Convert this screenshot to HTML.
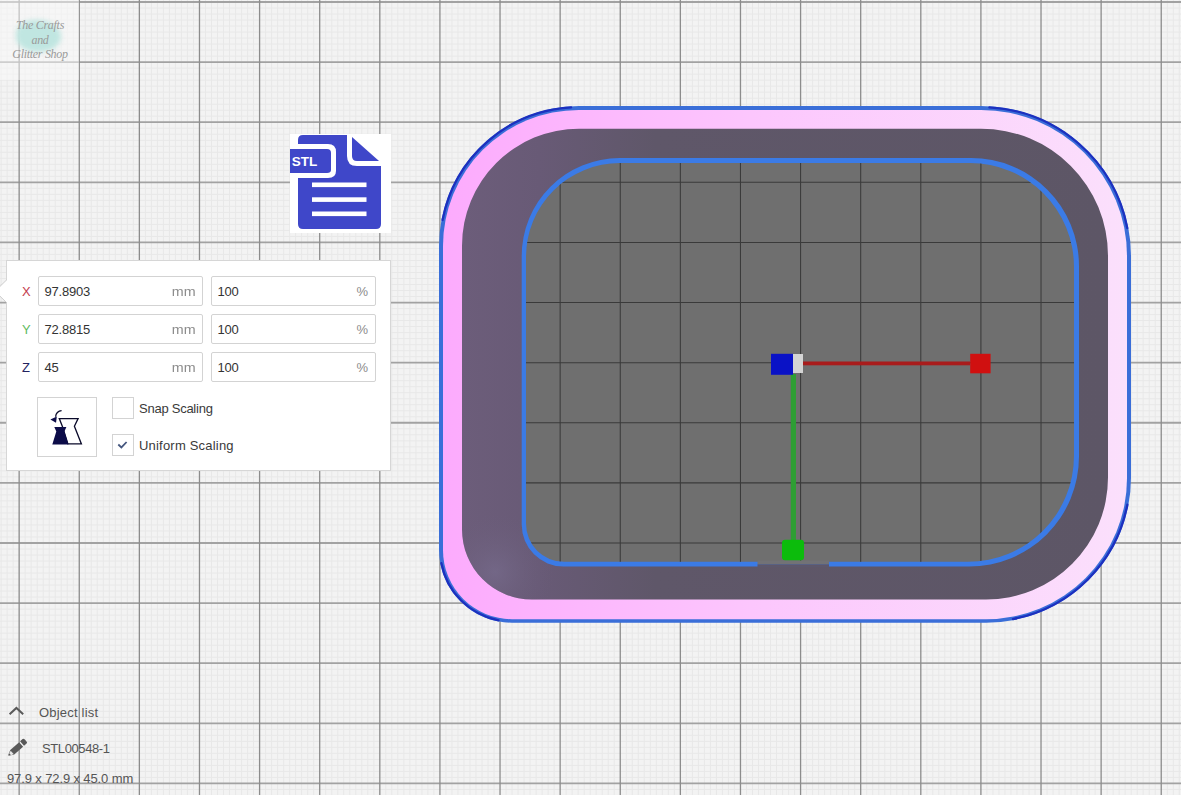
<!DOCTYPE html>
<html><head><meta charset="utf-8">
<style>
html,body{margin:0;padding:0}
body{width:1181px;height:795px;overflow:hidden;position:relative;background:#f3f3f3;font-family:"Liberation Sans",sans-serif}
.abs{position:absolute}
.panel{position:absolute;left:6px;top:260px;width:383px;height:209px;background:#fff;border:1px solid #d6d6d6;box-sizing:content-box}
.lbl{position:absolute;font-size:13px;line-height:16px}
.inp{position:absolute;height:28px;border:1px solid #d3d3d3;border-radius:2px;background:#fff;box-sizing:content-box}
.inp .v{position:absolute;left:5.5px;top:7px;letter-spacing:-0.2px;font-size:13px;line-height:16px;color:#333}
.inp .u{position:absolute;right:7px;top:7px;font-size:13px;line-height:16px;color:#8c8c8c}
.cb{position:absolute;width:20px;height:20px;border:1px solid #d3d3d3;background:#fff}
.txt{position:absolute;font-size:13px;line-height:16px;color:#3a3a3a;letter-spacing:-0.25px}
.bl{position:absolute;font-size:13px;line-height:16px;color:#555}
</style></head><body>
<svg width="1181" height="795" viewBox="0 0 1181 795" style="position:absolute;left:0;top:0">
<defs>
<linearGradient id="pk" x1="0" y1="0" x2="1" y2="0">
<stop offset="0" stop-color="#fcabfd"/><stop offset="0.45" stop-color="#fcc6fd"/><stop offset="1" stop-color="#fbe0fc"/>
</linearGradient>
<linearGradient id="pu" x1="0" y1="0" x2="1" y2="0">
<stop offset="0" stop-color="#6c5d7a"/><stop offset="0.12" stop-color="#685a76"/><stop offset="0.3" stop-color="#5f5769"/><stop offset="1" stop-color="#5d5666"/>
</linearGradient>
<radialGradient id="bl" cx="495" cy="572" r="60" gradientUnits="userSpaceOnUse">
<stop offset="0" stop-color="#7a7092" stop-opacity="0.55"/><stop offset="1" stop-color="#6a5d7a" stop-opacity="0"/>
</radialGradient>
<clipPath id="fc"><path d="M620.00,163.00 L970.00,163.00 A104,104 0 0 1 1074.00,267.00 L1074.00,455.80 A106,106 0 0 1 968.00,561.80 L564.00,561.80 A38,38 0 0 1 526.00,523.80 L526.00,257.00 A94,94 0 0 1 620.00,163.00 Z"/></clipPath>
</defs>
<g stroke="#e8e8e8" stroke-width="1"><line x1="1.12" y1="0" x2="1.12" y2="795"/><line x1="7.13" y1="0" x2="7.13" y2="795"/><line x1="13.14" y1="0" x2="13.14" y2="795"/><line x1="25.16" y1="0" x2="25.16" y2="795"/><line x1="31.17" y1="0" x2="31.17" y2="795"/><line x1="37.18" y1="0" x2="37.18" y2="795"/><line x1="43.19" y1="0" x2="43.19" y2="795"/><line x1="49.20" y1="0" x2="49.20" y2="795"/><line x1="55.22" y1="0" x2="55.22" y2="795"/><line x1="61.23" y1="0" x2="61.23" y2="795"/><line x1="67.24" y1="0" x2="67.24" y2="795"/><line x1="73.25" y1="0" x2="73.25" y2="795"/><line x1="85.27" y1="0" x2="85.27" y2="795"/><line x1="91.28" y1="0" x2="91.28" y2="795"/><line x1="97.29" y1="0" x2="97.29" y2="795"/><line x1="103.30" y1="0" x2="103.30" y2="795"/><line x1="109.31" y1="0" x2="109.31" y2="795"/><line x1="115.33" y1="0" x2="115.33" y2="795"/><line x1="121.34" y1="0" x2="121.34" y2="795"/><line x1="127.35" y1="0" x2="127.35" y2="795"/><line x1="133.36" y1="0" x2="133.36" y2="795"/><line x1="145.38" y1="0" x2="145.38" y2="795"/><line x1="151.39" y1="0" x2="151.39" y2="795"/><line x1="157.40" y1="0" x2="157.40" y2="795"/><line x1="163.41" y1="0" x2="163.41" y2="795"/><line x1="169.43" y1="0" x2="169.43" y2="795"/><line x1="175.44" y1="0" x2="175.44" y2="795"/><line x1="181.45" y1="0" x2="181.45" y2="795"/><line x1="187.46" y1="0" x2="187.46" y2="795"/><line x1="193.47" y1="0" x2="193.47" y2="795"/><line x1="205.49" y1="0" x2="205.49" y2="795"/><line x1="211.50" y1="0" x2="211.50" y2="795"/><line x1="217.51" y1="0" x2="217.51" y2="795"/><line x1="223.52" y1="0" x2="223.52" y2="795"/><line x1="229.53" y1="0" x2="229.53" y2="795"/><line x1="235.55" y1="0" x2="235.55" y2="795"/><line x1="241.56" y1="0" x2="241.56" y2="795"/><line x1="247.57" y1="0" x2="247.57" y2="795"/><line x1="253.58" y1="0" x2="253.58" y2="795"/><line x1="265.60" y1="0" x2="265.60" y2="795"/><line x1="271.61" y1="0" x2="271.61" y2="795"/><line x1="277.62" y1="0" x2="277.62" y2="795"/><line x1="283.63" y1="0" x2="283.63" y2="795"/><line x1="289.64" y1="0" x2="289.64" y2="795"/><line x1="295.66" y1="0" x2="295.66" y2="795"/><line x1="301.67" y1="0" x2="301.67" y2="795"/><line x1="307.68" y1="0" x2="307.68" y2="795"/><line x1="313.69" y1="0" x2="313.69" y2="795"/><line x1="325.71" y1="0" x2="325.71" y2="795"/><line x1="331.72" y1="0" x2="331.72" y2="795"/><line x1="337.73" y1="0" x2="337.73" y2="795"/><line x1="343.74" y1="0" x2="343.74" y2="795"/><line x1="349.75" y1="0" x2="349.75" y2="795"/><line x1="355.77" y1="0" x2="355.77" y2="795"/><line x1="361.78" y1="0" x2="361.78" y2="795"/><line x1="367.79" y1="0" x2="367.79" y2="795"/><line x1="373.80" y1="0" x2="373.80" y2="795"/><line x1="385.82" y1="0" x2="385.82" y2="795"/><line x1="391.83" y1="0" x2="391.83" y2="795"/><line x1="397.84" y1="0" x2="397.84" y2="795"/><line x1="403.85" y1="0" x2="403.85" y2="795"/><line x1="409.86" y1="0" x2="409.86" y2="795"/><line x1="415.88" y1="0" x2="415.88" y2="795"/><line x1="421.89" y1="0" x2="421.89" y2="795"/><line x1="427.90" y1="0" x2="427.90" y2="795"/><line x1="433.91" y1="0" x2="433.91" y2="795"/><line x1="445.93" y1="0" x2="445.93" y2="795"/><line x1="451.94" y1="0" x2="451.94" y2="795"/><line x1="457.95" y1="0" x2="457.95" y2="795"/><line x1="463.96" y1="0" x2="463.96" y2="795"/><line x1="469.97" y1="0" x2="469.97" y2="795"/><line x1="475.99" y1="0" x2="475.99" y2="795"/><line x1="482.00" y1="0" x2="482.00" y2="795"/><line x1="488.01" y1="0" x2="488.01" y2="795"/><line x1="494.02" y1="0" x2="494.02" y2="795"/><line x1="506.04" y1="0" x2="506.04" y2="795"/><line x1="512.05" y1="0" x2="512.05" y2="795"/><line x1="518.06" y1="0" x2="518.06" y2="795"/><line x1="524.07" y1="0" x2="524.07" y2="795"/><line x1="530.08" y1="0" x2="530.08" y2="795"/><line x1="536.10" y1="0" x2="536.10" y2="795"/><line x1="542.11" y1="0" x2="542.11" y2="795"/><line x1="548.12" y1="0" x2="548.12" y2="795"/><line x1="554.13" y1="0" x2="554.13" y2="795"/><line x1="566.15" y1="0" x2="566.15" y2="795"/><line x1="572.16" y1="0" x2="572.16" y2="795"/><line x1="578.17" y1="0" x2="578.17" y2="795"/><line x1="584.18" y1="0" x2="584.18" y2="795"/><line x1="590.19" y1="0" x2="590.19" y2="795"/><line x1="596.21" y1="0" x2="596.21" y2="795"/><line x1="602.22" y1="0" x2="602.22" y2="795"/><line x1="608.23" y1="0" x2="608.23" y2="795"/><line x1="614.24" y1="0" x2="614.24" y2="795"/><line x1="626.26" y1="0" x2="626.26" y2="795"/><line x1="632.27" y1="0" x2="632.27" y2="795"/><line x1="638.28" y1="0" x2="638.28" y2="795"/><line x1="644.29" y1="0" x2="644.29" y2="795"/><line x1="650.30" y1="0" x2="650.30" y2="795"/><line x1="656.32" y1="0" x2="656.32" y2="795"/><line x1="662.33" y1="0" x2="662.33" y2="795"/><line x1="668.34" y1="0" x2="668.34" y2="795"/><line x1="674.35" y1="0" x2="674.35" y2="795"/><line x1="686.37" y1="0" x2="686.37" y2="795"/><line x1="692.38" y1="0" x2="692.38" y2="795"/><line x1="698.39" y1="0" x2="698.39" y2="795"/><line x1="704.40" y1="0" x2="704.40" y2="795"/><line x1="710.41" y1="0" x2="710.41" y2="795"/><line x1="716.43" y1="0" x2="716.43" y2="795"/><line x1="722.44" y1="0" x2="722.44" y2="795"/><line x1="728.45" y1="0" x2="728.45" y2="795"/><line x1="734.46" y1="0" x2="734.46" y2="795"/><line x1="746.48" y1="0" x2="746.48" y2="795"/><line x1="752.49" y1="0" x2="752.49" y2="795"/><line x1="758.50" y1="0" x2="758.50" y2="795"/><line x1="764.51" y1="0" x2="764.51" y2="795"/><line x1="770.52" y1="0" x2="770.52" y2="795"/><line x1="776.54" y1="0" x2="776.54" y2="795"/><line x1="782.55" y1="0" x2="782.55" y2="795"/><line x1="788.56" y1="0" x2="788.56" y2="795"/><line x1="794.57" y1="0" x2="794.57" y2="795"/><line x1="806.59" y1="0" x2="806.59" y2="795"/><line x1="812.60" y1="0" x2="812.60" y2="795"/><line x1="818.61" y1="0" x2="818.61" y2="795"/><line x1="824.62" y1="0" x2="824.62" y2="795"/><line x1="830.63" y1="0" x2="830.63" y2="795"/><line x1="836.65" y1="0" x2="836.65" y2="795"/><line x1="842.66" y1="0" x2="842.66" y2="795"/><line x1="848.67" y1="0" x2="848.67" y2="795"/><line x1="854.68" y1="0" x2="854.68" y2="795"/><line x1="866.70" y1="0" x2="866.70" y2="795"/><line x1="872.71" y1="0" x2="872.71" y2="795"/><line x1="878.72" y1="0" x2="878.72" y2="795"/><line x1="884.73" y1="0" x2="884.73" y2="795"/><line x1="890.74" y1="0" x2="890.74" y2="795"/><line x1="896.76" y1="0" x2="896.76" y2="795"/><line x1="902.77" y1="0" x2="902.77" y2="795"/><line x1="908.78" y1="0" x2="908.78" y2="795"/><line x1="914.79" y1="0" x2="914.79" y2="795"/><line x1="926.81" y1="0" x2="926.81" y2="795"/><line x1="932.82" y1="0" x2="932.82" y2="795"/><line x1="938.83" y1="0" x2="938.83" y2="795"/><line x1="944.84" y1="0" x2="944.84" y2="795"/><line x1="950.85" y1="0" x2="950.85" y2="795"/><line x1="956.87" y1="0" x2="956.87" y2="795"/><line x1="962.88" y1="0" x2="962.88" y2="795"/><line x1="968.89" y1="0" x2="968.89" y2="795"/><line x1="974.90" y1="0" x2="974.90" y2="795"/><line x1="986.92" y1="0" x2="986.92" y2="795"/><line x1="992.93" y1="0" x2="992.93" y2="795"/><line x1="998.94" y1="0" x2="998.94" y2="795"/><line x1="1004.95" y1="0" x2="1004.95" y2="795"/><line x1="1010.96" y1="0" x2="1010.96" y2="795"/><line x1="1016.98" y1="0" x2="1016.98" y2="795"/><line x1="1022.99" y1="0" x2="1022.99" y2="795"/><line x1="1029.00" y1="0" x2="1029.00" y2="795"/><line x1="1035.01" y1="0" x2="1035.01" y2="795"/><line x1="1047.03" y1="0" x2="1047.03" y2="795"/><line x1="1053.04" y1="0" x2="1053.04" y2="795"/><line x1="1059.05" y1="0" x2="1059.05" y2="795"/><line x1="1065.06" y1="0" x2="1065.06" y2="795"/><line x1="1071.08" y1="0" x2="1071.08" y2="795"/><line x1="1077.09" y1="0" x2="1077.09" y2="795"/><line x1="1083.10" y1="0" x2="1083.10" y2="795"/><line x1="1089.11" y1="0" x2="1089.11" y2="795"/><line x1="1095.12" y1="0" x2="1095.12" y2="795"/><line x1="1107.14" y1="0" x2="1107.14" y2="795"/><line x1="1113.15" y1="0" x2="1113.15" y2="795"/><line x1="1119.16" y1="0" x2="1119.16" y2="795"/><line x1="1125.17" y1="0" x2="1125.17" y2="795"/><line x1="1131.19" y1="0" x2="1131.19" y2="795"/><line x1="1137.20" y1="0" x2="1137.20" y2="795"/><line x1="1143.21" y1="0" x2="1143.21" y2="795"/><line x1="1149.22" y1="0" x2="1149.22" y2="795"/><line x1="1155.23" y1="0" x2="1155.23" y2="795"/><line x1="1167.25" y1="0" x2="1167.25" y2="795"/><line x1="1173.26" y1="0" x2="1173.26" y2="795"/><line x1="1179.27" y1="0" x2="1179.27" y2="795"/><line x1="0" y1="8.01" x2="1181" y2="8.01"/><line x1="0" y1="14.02" x2="1181" y2="14.02"/><line x1="0" y1="20.03" x2="1181" y2="20.03"/><line x1="0" y1="26.04" x2="1181" y2="26.04"/><line x1="0" y1="32.05" x2="1181" y2="32.05"/><line x1="0" y1="38.07" x2="1181" y2="38.07"/><line x1="0" y1="44.08" x2="1181" y2="44.08"/><line x1="0" y1="50.09" x2="1181" y2="50.09"/><line x1="0" y1="56.10" x2="1181" y2="56.10"/><line x1="0" y1="68.12" x2="1181" y2="68.12"/><line x1="0" y1="74.13" x2="1181" y2="74.13"/><line x1="0" y1="80.14" x2="1181" y2="80.14"/><line x1="0" y1="86.15" x2="1181" y2="86.15"/><line x1="0" y1="92.16" x2="1181" y2="92.16"/><line x1="0" y1="98.18" x2="1181" y2="98.18"/><line x1="0" y1="104.19" x2="1181" y2="104.19"/><line x1="0" y1="110.20" x2="1181" y2="110.20"/><line x1="0" y1="116.21" x2="1181" y2="116.21"/><line x1="0" y1="128.23" x2="1181" y2="128.23"/><line x1="0" y1="134.24" x2="1181" y2="134.24"/><line x1="0" y1="140.25" x2="1181" y2="140.25"/><line x1="0" y1="146.26" x2="1181" y2="146.26"/><line x1="0" y1="152.28" x2="1181" y2="152.28"/><line x1="0" y1="158.29" x2="1181" y2="158.29"/><line x1="0" y1="164.30" x2="1181" y2="164.30"/><line x1="0" y1="170.31" x2="1181" y2="170.31"/><line x1="0" y1="176.32" x2="1181" y2="176.32"/><line x1="0" y1="188.34" x2="1181" y2="188.34"/><line x1="0" y1="194.35" x2="1181" y2="194.35"/><line x1="0" y1="200.36" x2="1181" y2="200.36"/><line x1="0" y1="206.37" x2="1181" y2="206.37"/><line x1="0" y1="212.38" x2="1181" y2="212.38"/><line x1="0" y1="218.40" x2="1181" y2="218.40"/><line x1="0" y1="224.41" x2="1181" y2="224.41"/><line x1="0" y1="230.42" x2="1181" y2="230.42"/><line x1="0" y1="236.43" x2="1181" y2="236.43"/><line x1="0" y1="248.45" x2="1181" y2="248.45"/><line x1="0" y1="254.46" x2="1181" y2="254.46"/><line x1="0" y1="260.47" x2="1181" y2="260.47"/><line x1="0" y1="266.48" x2="1181" y2="266.48"/><line x1="0" y1="272.50" x2="1181" y2="272.50"/><line x1="0" y1="278.51" x2="1181" y2="278.51"/><line x1="0" y1="284.52" x2="1181" y2="284.52"/><line x1="0" y1="290.53" x2="1181" y2="290.53"/><line x1="0" y1="296.54" x2="1181" y2="296.54"/><line x1="0" y1="308.56" x2="1181" y2="308.56"/><line x1="0" y1="314.57" x2="1181" y2="314.57"/><line x1="0" y1="320.58" x2="1181" y2="320.58"/><line x1="0" y1="326.59" x2="1181" y2="326.59"/><line x1="0" y1="332.61" x2="1181" y2="332.61"/><line x1="0" y1="338.62" x2="1181" y2="338.62"/><line x1="0" y1="344.63" x2="1181" y2="344.63"/><line x1="0" y1="350.64" x2="1181" y2="350.64"/><line x1="0" y1="356.65" x2="1181" y2="356.65"/><line x1="0" y1="368.67" x2="1181" y2="368.67"/><line x1="0" y1="374.68" x2="1181" y2="374.68"/><line x1="0" y1="380.69" x2="1181" y2="380.69"/><line x1="0" y1="386.70" x2="1181" y2="386.70"/><line x1="0" y1="392.71" x2="1181" y2="392.71"/><line x1="0" y1="398.73" x2="1181" y2="398.73"/><line x1="0" y1="404.74" x2="1181" y2="404.74"/><line x1="0" y1="410.75" x2="1181" y2="410.75"/><line x1="0" y1="416.76" x2="1181" y2="416.76"/><line x1="0" y1="428.78" x2="1181" y2="428.78"/><line x1="0" y1="434.79" x2="1181" y2="434.79"/><line x1="0" y1="440.80" x2="1181" y2="440.80"/><line x1="0" y1="446.81" x2="1181" y2="446.81"/><line x1="0" y1="452.82" x2="1181" y2="452.82"/><line x1="0" y1="458.84" x2="1181" y2="458.84"/><line x1="0" y1="464.85" x2="1181" y2="464.85"/><line x1="0" y1="470.86" x2="1181" y2="470.86"/><line x1="0" y1="476.87" x2="1181" y2="476.87"/><line x1="0" y1="488.89" x2="1181" y2="488.89"/><line x1="0" y1="494.90" x2="1181" y2="494.90"/><line x1="0" y1="500.91" x2="1181" y2="500.91"/><line x1="0" y1="506.92" x2="1181" y2="506.92"/><line x1="0" y1="512.93" x2="1181" y2="512.93"/><line x1="0" y1="518.95" x2="1181" y2="518.95"/><line x1="0" y1="524.96" x2="1181" y2="524.96"/><line x1="0" y1="530.97" x2="1181" y2="530.97"/><line x1="0" y1="536.98" x2="1181" y2="536.98"/><line x1="0" y1="549.00" x2="1181" y2="549.00"/><line x1="0" y1="555.01" x2="1181" y2="555.01"/><line x1="0" y1="561.02" x2="1181" y2="561.02"/><line x1="0" y1="567.03" x2="1181" y2="567.03"/><line x1="0" y1="573.04" x2="1181" y2="573.04"/><line x1="0" y1="579.06" x2="1181" y2="579.06"/><line x1="0" y1="585.07" x2="1181" y2="585.07"/><line x1="0" y1="591.08" x2="1181" y2="591.08"/><line x1="0" y1="597.09" x2="1181" y2="597.09"/><line x1="0" y1="609.11" x2="1181" y2="609.11"/><line x1="0" y1="615.12" x2="1181" y2="615.12"/><line x1="0" y1="621.13" x2="1181" y2="621.13"/><line x1="0" y1="627.14" x2="1181" y2="627.14"/><line x1="0" y1="633.15" x2="1181" y2="633.15"/><line x1="0" y1="639.17" x2="1181" y2="639.17"/><line x1="0" y1="645.18" x2="1181" y2="645.18"/><line x1="0" y1="651.19" x2="1181" y2="651.19"/><line x1="0" y1="657.20" x2="1181" y2="657.20"/><line x1="0" y1="669.22" x2="1181" y2="669.22"/><line x1="0" y1="675.23" x2="1181" y2="675.23"/><line x1="0" y1="681.24" x2="1181" y2="681.24"/><line x1="0" y1="687.25" x2="1181" y2="687.25"/><line x1="0" y1="693.26" x2="1181" y2="693.26"/><line x1="0" y1="699.28" x2="1181" y2="699.28"/><line x1="0" y1="705.29" x2="1181" y2="705.29"/><line x1="0" y1="711.30" x2="1181" y2="711.30"/><line x1="0" y1="717.31" x2="1181" y2="717.31"/><line x1="0" y1="729.33" x2="1181" y2="729.33"/><line x1="0" y1="735.34" x2="1181" y2="735.34"/><line x1="0" y1="741.35" x2="1181" y2="741.35"/><line x1="0" y1="747.36" x2="1181" y2="747.36"/><line x1="0" y1="753.37" x2="1181" y2="753.37"/><line x1="0" y1="759.39" x2="1181" y2="759.39"/><line x1="0" y1="765.40" x2="1181" y2="765.40"/><line x1="0" y1="771.41" x2="1181" y2="771.41"/><line x1="0" y1="777.42" x2="1181" y2="777.42"/><line x1="0" y1="789.44" x2="1181" y2="789.44"/><line x1="0" y1="795.45" x2="1181" y2="795.45"/></g>
<g stroke="#a2a2a2" stroke-width="1.8"><line x1="0" y1="2.00" x2="1181" y2="2.00"/><line x1="0" y1="62.11" x2="1181" y2="62.11"/><line x1="0" y1="122.22" x2="1181" y2="122.22"/><line x1="0" y1="182.33" x2="1181" y2="182.33"/><line x1="0" y1="242.44" x2="1181" y2="242.44"/><line x1="0" y1="302.55" x2="1181" y2="302.55"/><line x1="0" y1="362.66" x2="1181" y2="362.66"/><line x1="0" y1="422.77" x2="1181" y2="422.77"/><line x1="0" y1="482.88" x2="1181" y2="482.88"/><line x1="0" y1="542.99" x2="1181" y2="542.99"/><line x1="0" y1="603.10" x2="1181" y2="603.10"/><line x1="0" y1="663.21" x2="1181" y2="663.21"/><line x1="0" y1="723.32" x2="1181" y2="723.32"/><line x1="0" y1="783.43" x2="1181" y2="783.43"/></g>
<g stroke="#8c8c8c" stroke-width="1.3"><line x1="19.15" y1="0" x2="19.15" y2="795"/><line x1="79.26" y1="0" x2="79.26" y2="795"/><line x1="139.37" y1="0" x2="139.37" y2="795"/><line x1="199.48" y1="0" x2="199.48" y2="795"/><line x1="259.59" y1="0" x2="259.59" y2="795"/><line x1="319.70" y1="0" x2="319.70" y2="795"/><line x1="379.81" y1="0" x2="379.81" y2="795"/><line x1="439.92" y1="0" x2="439.92" y2="795"/><line x1="500.03" y1="0" x2="500.03" y2="795"/><line x1="560.14" y1="0" x2="560.14" y2="795"/><line x1="620.25" y1="0" x2="620.25" y2="795"/><line x1="680.36" y1="0" x2="680.36" y2="795"/><line x1="740.47" y1="0" x2="740.47" y2="795"/><line x1="800.58" y1="0" x2="800.58" y2="795"/><line x1="860.69" y1="0" x2="860.69" y2="795"/><line x1="920.80" y1="0" x2="920.80" y2="795"/><line x1="980.91" y1="0" x2="980.91" y2="795"/><line x1="1041.02" y1="0" x2="1041.02" y2="795"/><line x1="1101.13" y1="0" x2="1101.13" y2="795"/><line x1="1161.24" y1="0" x2="1161.24" y2="795"/></g>
<path d="M579.00,106.00 L981.00,106.00 A150,150 0 0 1 1131.00,256.00 L1131.00,477.70 A145,145 0 0 1 986.00,622.70 L512.00,622.70 A73,73 0 0 1 439.00,549.70 L439.00,246.00 A140,140 0 0 1 579.00,106.00 Z" fill="#3a6ed8"/>
<path d="M579.00,110.00 L981.00,110.00 A146,146 0 0 1 1127.00,256.00 L1127.00,478.20 A141,141 0 0 1 986.00,619.20 L512.00,619.20 A69,69 0 0 1 443.00,550.20 L443.00,246.00 A136,136 0 0 1 579.00,110.00 Z" fill="url(#pk)"/>
<path d="M442.56,219.97 A138.9,138.9 0 0 1 571.15,107.32 M989.42,107.34 A148.9,148.9 0 0 1 1127.26,228.10 M1127.35,504.66 A143.9,143.9 0 0 1 1012.96,619.05 M498.53,620.33 A71.9,71.9 0 0 1 441.37,563.17 " fill="none" stroke="#1c30bf" stroke-width="2.3" stroke-linecap="round"/>
<path d="M579.00,128.70 L981.00,128.70 A127,127 0 0 1 1108.00,255.70 L1108.00,477.50 A122,122 0 0 1 986.00,599.50 L532.00,599.50 A70,70 0 0 1 462.00,529.50 L462.00,245.70 A117,117 0 0 1 579.00,128.70 Z" fill="url(#pu)"/>
<path d="M579.00,128.70 L981.00,128.70 A127,127 0 0 1 1108.00,255.70 L1108.00,477.50 A122,122 0 0 1 986.00,599.50 L532.00,599.50 A70,70 0 0 1 462.00,529.50 L462.00,245.70 A117,117 0 0 1 579.00,128.70 Z" fill="url(#bl)"/>
<path d="M619.70,158.00 L971.00,158.00 A108,108 0 0 1 1079.00,266.00 L1079.00,456.60 A110,110 0 0 1 969.00,566.60 L563.70,566.60 A42,42 0 0 1 521.70,524.60 L521.70,256.00 A98,98 0 0 1 619.70,158.00 Z" fill="#3b7be6"/>
<path d="M620.00,163.00 L970.00,163.00 A104,104 0 0 1 1074.00,267.00 L1074.00,455.80 A106,106 0 0 1 968.00,561.80 L564.00,561.80 A38,38 0 0 1 526.00,523.80 L526.00,257.00 A94,94 0 0 1 620.00,163.00 Z" fill="#6f6f6f"/>
<g clip-path="url(#fc)" stroke="#3a3a3a" stroke-width="1.05"><line x1="500.03" y1="150" x2="500.03" y2="580"/><line x1="560.14" y1="150" x2="560.14" y2="580"/><line x1="620.25" y1="150" x2="620.25" y2="580"/><line x1="680.36" y1="150" x2="680.36" y2="580"/><line x1="740.47" y1="150" x2="740.47" y2="580"/><line x1="800.58" y1="150" x2="800.58" y2="580"/><line x1="860.69" y1="150" x2="860.69" y2="580"/><line x1="920.80" y1="150" x2="920.80" y2="580"/><line x1="980.91" y1="150" x2="980.91" y2="580"/><line x1="1041.02" y1="150" x2="1041.02" y2="580"/><line x1="500" y1="182.33" x2="1100" y2="182.33"/><line x1="500" y1="242.44" x2="1100" y2="242.44"/><line x1="500" y1="302.55" x2="1100" y2="302.55"/><line x1="500" y1="362.66" x2="1100" y2="362.66"/><line x1="500" y1="422.77" x2="1100" y2="422.77"/><line x1="500" y1="482.88" x2="1100" y2="482.88"/><line x1="500" y1="542.99" x2="1100" y2="542.99"/></g>
<rect x="757.5" y="560.5" width="71.5" height="3.8" fill="#727276"/>
<rect x="757.5" y="564.3" width="71.5" height="2.6" fill="#5f5769"/>
<!-- gizmo -->
<rect x="803" y="361.5" width="167" height="3.8" fill="#a81c1c"/>
<rect x="970.2" y="353.8" width="20.4" height="19.5" fill="#d01010"/>
<rect x="790.8" y="374" width="5.2" height="167" fill="#2e9e34"/>
<rect x="782" y="539.8" width="22" height="20.5" rx="3" fill="#0cbc0c"/>
<rect x="771" y="353.8" width="22" height="21" fill="#0a12c6"/>
<rect x="793" y="354" width="10" height="19" fill="#d4d4d4"/>
</svg>
<!-- logo -->
<div class="abs" style="left:0;top:0;width:78.6px;height:80px;background:rgba(250,250,250,0.5)"></div>
<div class="abs" style="left:16px;top:20px;width:45px;height:32px;border-radius:45% 55% 50% 50%;background:#c0e6e1;filter:blur(2.5px)"></div>
<div class="abs" style="left:4px;top:18px;width:72px;text-align:center;font-family:'Liberation Serif',serif;font-style:italic;font-size:12px;line-height:14.5px;color:#9a9a9a;letter-spacing:-0.3px">The Crafts<br>and<br>Glitter Shop</div>

<!-- STL icon -->
<svg class="abs" style="left:290px;top:134px" width="101" height="99" viewBox="0 0 101 99">
<rect x="0" y="0" width="101" height="99" fill="#fff"/>
<path d="M13,1 L57,1 L57,22 Q57,32 67,32 L91,32 L91,90 Q91,95 86,95 L13,95 Q8,95 8,90 L8,6 Q8,1 13,1 Z" fill="#3f47c9"/>
<path d="M62,3 L89,27 L67,27 Q62,27 62,22 Z" fill="#3f47c9"/>
<path d="M0,10 L38,10 Q46,10 46,18 L46,37 Q46,44 38,44 L0,44 Z" fill="#fff"/>
<path d="M0,15 L37,15 Q41,15 41,19 L41,36 Q41,39 37,39 L0,39 Z" fill="#3f47c9"/>
<text x="1.8" y="32" font-family="Liberation Sans" font-weight="bold" font-size="13.5" fill="#fff">STL</text>
<rect x="22" y="48.5" width="54.5" height="4.6" fill="#fff"/>
<rect x="22" y="63.3" width="54.5" height="4.6" fill="#fff"/>
<rect x="22" y="77.5" width="54.5" height="4.6" fill="#fff"/>
</svg>

<!-- panel -->
<div class="panel">
  <div class="lbl" style="left:15px;top:23px;color:#c43c4e">X</div>
  <div class="lbl" style="left:15px;top:61px;color:#62bb62">Y</div>
  <div class="lbl" style="left:15px;top:99px;color:#23235f">Z</div>
  <div class="inp" style="left:31px;top:15px;width:163px"><span class="v">97.8903</span><span class="u" style="right:6.3px;transform:scaleX(1.1);transform-origin:100% 50%">mm</span></div>
  <div class="inp" style="left:204px;top:15px;width:163px"><span class="v">100</span><span class="u">%</span></div>
  <div class="inp" style="left:31px;top:53px;width:163px"><span class="v">72.8815</span><span class="u" style="right:6.3px;transform:scaleX(1.1);transform-origin:100% 50%">mm</span></div>
  <div class="inp" style="left:204px;top:53px;width:163px"><span class="v">100</span><span class="u">%</span></div>
  <div class="inp" style="left:31px;top:91px;width:163px"><span class="v">45</span><span class="u" style="right:6.3px;transform:scaleX(1.1);transform-origin:100% 50%">mm</span></div>
  <div class="inp" style="left:204px;top:91px;width:163px"><span class="v">100</span><span class="u">%</span></div>
  <div class="abs" style="left:30px;top:136px;width:58px;height:58px;border:1px solid #d3d3d3"></div>
  <svg class="abs" style="left:30px;top:135px" width="64" height="65" viewBox="1 0.8 64 65">
    <path d="M23.3,23.4 L42.1,23.4 L38.4,31 L45.4,48.7 L31.9,48.7 L26.5,31.5 Z" fill="#fff" stroke="#0a0a2a" stroke-width="1.3" stroke-linejoin="miter"/>
    <path d="M18.3,31.9 L30.4,31.9 L28.4,36.3 L32.4,49.2 L16.3,49.2 L20.3,36.3 Z" fill="#0c0c48"/>
    <path d="M25.6,15.5 A6.2,6.2 0 0 0 19.6,21.6" fill="none" stroke="#0a0a2a" stroke-width="1.3"/>
    <path d="M14.4,24.3 L20.8,21.2 L20,27.6 Z" fill="#0c0c48"/>
  </svg>
  <div class="cb" style="left:105px;top:136px"></div>
  <div class="cb" style="left:105px;top:173px"><svg width="20" height="20" style="position:absolute;left:0;top:0"><path d="M5.3,9.5 L8.4,12.4 L13.6,7" fill="none" stroke="#45567e" stroke-width="1.8"/></svg></div>
  <div class="txt" style="left:132px;top:140px">Snap Scaling</div>
  <div class="txt" style="left:132px;top:177px;letter-spacing:0.2px">Uniform Scaling</div>
</div>
<!-- arrow -->
<svg class="abs" style="left:0;top:276px" width="10" height="30" viewBox="0 0 10 30"><path d="M7,3.5 L-5,15.3 L7,27" fill="#fff" stroke="#cdcdcd" stroke-width="1"/><rect x="7" y="4.5" width="3" height="21.5" fill="#fff"/></svg>
<!-- bottom left -->
<svg class="abs" style="left:8px;top:704px" width="18" height="12" viewBox="0 0 18 12"><path d="M1.6,10.3 L8.4,3.9 L15.2,10.3" fill="none" stroke="#5a5a5a" stroke-width="2"/></svg>
<div class="bl" style="left:39px;top:705px;letter-spacing:0.2px">Object list</div>
<svg class="abs" style="left:4px;top:734px" width="26" height="26" viewBox="0 0 26 26"><g transform="translate(13.1,14) rotate(-41.6)">
<path d="M-11.4,0.3 Q-11.6,-0.3 -11,-0.8 L-6.5,-3 L5.4,-3 L5.4,3 L-6.5,3 Z" fill="#595959"/>
<path d="M6.6,-3 L10,-3 Q11.4,-3 11.4,-1.6 L11.4,1.6 Q11.4,3 10,3 L6.6,3 Z" fill="#595959"/>
<path d="M-9.3,-1.4 L-6.6,-2.2 L-6.6,2.2 L-9.3,1.4 Z" fill="#e6e6e6"/>
</g></svg>
<div class="bl" style="left:42px;top:741px;letter-spacing:-0.4px">STL00548-1</div>
<div class="bl" style="left:7px;top:771px;letter-spacing:-0.12px">97.9 x 72.9 x 45.0 mm</div>
</body></html>
